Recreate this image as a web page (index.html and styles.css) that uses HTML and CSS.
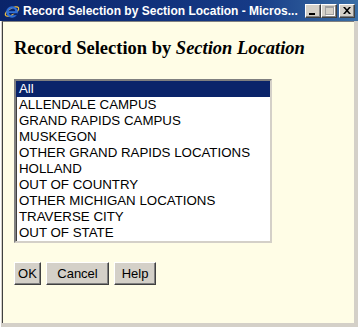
FILE: index.html
```html
<!DOCTYPE html>
<html lang="en">
<head>
  <meta charset="UTF-8">
  <meta name="viewport" content="width=device-width, initial-scale=1.0">
  <title>Record Selection by Section Location</title>

  <link rel="stylesheet" href="styles.css">
</head>
<body>

  <div class="window">
    <div class="titlebar">
      <svg class="app-icon" width="16" height="16" viewBox="0 0 16 16">
        <ellipse cx="8" cy="8.5" rx="7.5" ry="3.2" fill="none" stroke="#f0c040" stroke-width="1.2" transform="rotate(-30 8 8.5)"/>
        <circle cx="8" cy="9" r="4.6" fill="none" stroke="#2f6fd8" stroke-width="2.4"/>
        <rect x="4" y="8.2" width="8.4" height="1.8" fill="#2f6fd8"/>
        <rect x="9.5" y="10.2" width="4" height="2" fill="#0a246a"/>
      </svg>
      <span class="title">Record Selection by Section Location - Micros...</span>
      <div class="controls">
        <span class="ctl ctl-min"><i></i></span>
        <span class="ctl ctl-max"><i></i></span>
        <span class="ctl ctl-close">
          <svg width="8" height="7" viewBox="0 0 8 7">
            <path d="M0 0h2l2 2.2L6 0h2L5 3.5 8 7H6L4 4.8 2 7H0l3-3.5z" fill="#000"/>
          </svg>
        </span>
      </div>
    </div>

    <div class="client">
      <h1 class="heading">Record Selection by <em>Section Location</em></h1>

      <ul class="listbox">
        <li class="selected">All</li>
        <li>ALLENDALE CAMPUS</li>
        <li>GRAND RAPIDS CAMPUS</li>
        <li>MUSKEGON</li>
        <li>OTHER GRAND RAPIDS LOCATIONS</li>
        <li>HOLLAND</li>
        <li>OUT OF COUNTRY</li>
        <li>OTHER MICHIGAN LOCATIONS</li>
        <li>TRAVERSE CITY</li>
        <li>OUT OF STATE</li>
      </ul>

      <div class="actions">
        <button class="btn btn-ok">OK</button>
        <button class="btn btn-cancel">Cancel</button>
        <button class="btn btn-help">Help</button>
      </div>
    </div>
  </div>

</body>
</html>
```

FILE: styles.css
```css
body {
  margin: 0;
  background: #d4d0c8;
}

.window {
  width: 358px;
  height: 327px;
  box-sizing: border-box;
  display: flex;
  flex-direction: column;
  background: #d4d0c8;
  padding: 0 4px 4px 1px;
  border-left: 1px solid #ffffff;
}

.titlebar {
  height: 21px;
  margin-left: -2px;
  margin-right: -4px;
  display: flex;
  align-items: center;
  padding: 0 3px 0 4px;
  background: linear-gradient(to right, #0a246a, #163a86 70%, #3a6ea5);
  color: #fff;
}

.app-icon {
  flex: none;
  margin-right: 3px;
}

.title {
  flex: 1;
  font-family: "Liberation Sans", Arial, sans-serif;
  font-weight: bold;
  font-size: 12px;
  white-space: nowrap;
  overflow: hidden;
}

.controls {
  display: flex;
  align-items: center;
}

.ctl {
  width: 16px;
  height: 14px;
  box-sizing: border-box;
  background: #d4d0c8;
  border: 1px solid;
  border-color: #ffffff #404040 #404040 #ffffff;
  box-shadow: inset -1px -1px 0 #808080;
  display: flex;
  align-items: center;
  justify-content: center;
}

.ctl-min i {
  width: 6px;
  height: 2px;
  background: #000;
  margin-top: 6px;
  margin-left: -2px;
}

.ctl-max i {
  width: 7px;
  height: 6px;
  border: 1px solid #a0a0a0;
  border-top-width: 2px;
  box-shadow: 1px 1px 0 #fff;
}

.ctl-close {
  margin-left: 2px;
}

.client {
  flex: 1;
  background: #fffde6;
  border-top: 1px solid #808080;
  border-left: 1px solid #404040;
  padding: 15px 0 0 11px;
  font-family: "Liberation Sans", Arial, sans-serif;
}

.heading {
  margin: 0;
  font-family: "Liberation Serif", "Times New Roman", serif;
  font-size: 18.5px;
  font-weight: bold;
  line-height: 22px;
  color: #000;
}

.heading em {
  font-style: italic;
}

.listbox {
  list-style: none;
  margin: 20px 0 0 0;
  padding: 0;
  width: 258px;
  box-sizing: border-box;
  background: #fff;
  border: 2px solid;
  border-color: #808080 #d4d0c8 #d4d0c8 #808080;
  box-shadow: inset 1px 1px 0 #404040;
}

.listbox li {
  height: 16px;
  line-height: 15px;
  padding-left: 3px;
  font-size: 13.3px;
  color: #000;
  white-space: nowrap;
}

.listbox li.selected {
  background: #0a246a;
  color: #fff;
}

.actions {
  display: flex;
  gap: 5px;
  margin-top: 19px;
}

.btn {
  height: 23px;
  padding: 0;
  font-family: "Liberation Sans", Arial, sans-serif;
  font-size: 13px;
  color: #000;
  background: #d4d0c8;
  border: 1px solid;
  border-color: #ffffff #404040 #404040 #ffffff;
  box-shadow: inset -1px -1px 0 #808080;
  border-radius: 0;
}

.btn-ok {
  width: 27px;
}

.btn-cancel {
  width: 63px;
}

.btn-help {
  width: 42px;
}
```
